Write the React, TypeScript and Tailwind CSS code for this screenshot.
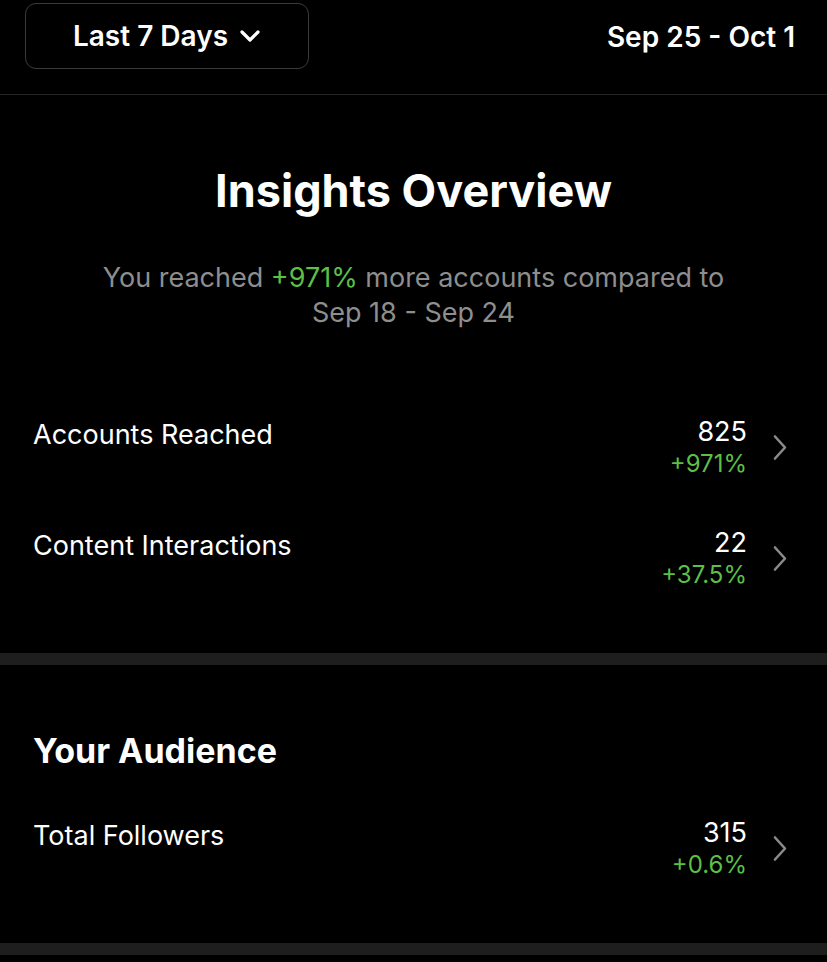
import React from "react";

const Chevron = () => (
  <svg width="18" height="28" viewBox="0 0 18 28" fill="none" className="shrink-0">
    <path d="M4 2.5 L14 13.5 L4 24.5" stroke="#8a8a8a" strokeWidth="2.6" strokeLinecap="round" strokeLinejoin="round" />
  </svg>
);

const Row = ({ label, value, change }: { label: string; value: string; change: string }) => (
  <div className="flex items-start justify-between pl-[33px] pr-[38px]">
    <div className="text-[27px] leading-[32px] text-white pt-[3px]">{label}</div>
    <div className="flex items-center gap-[24px]">
      <div className="flex flex-col items-end">
        <div className="text-[27px] leading-[32px] text-white">{value}</div>
        <div className="text-[24px] leading-[32px] text-[#5cbf46]">{change}</div>
      </div>
      <Chevron />
    </div>
  </div>
);

export default function App() {
  return (
    <div className="w-[827px] h-[962px] bg-black overflow-hidden" style={{ fontFamily: "Inter, 'Noto Sans', sans-serif" }}>
      <div className="flex items-start justify-between pt-[3px] h-[95px] border-b border-[#262626] pl-[25px] pr-[32px]">
        <button className="flex items-center justify-center gap-[11px] w-[284px] h-[66px] rounded-[11px] border border-[#3a3a3a] text-white text-[28px] font-semibold">
          <span>Last 7 Days</span>
          <svg width="22" height="14" viewBox="0 0 22 14" fill="none">
            <path d="M3 3 L11 11 L19 3" stroke="white" strokeWidth="3.2" strokeLinecap="round" strokeLinejoin="round" />
          </svg>
        </button>
        <div className="h-[68px] flex items-center text-white text-[28px] font-semibold">Sep 25 - Oct 1</div>
      </div>

      <div className="pt-[70px] text-center">
        <h1 className="text-[45px] leading-[52px] font-bold text-white">Insights Overview</h1>
        <p className="mt-[43px] text-[27px] leading-[35px] text-[#8e8e8e]">
          You reached <span className="text-[#5cbf46]">+971%</span> more accounts compared to
          <br />
          Sep 18 - Sep 24
        </p>
      </div>

      <div className="pt-[86px] flex flex-col gap-[47px]">
        <Row label="Accounts Reached" value="825" change="+971%" />
        <Row label="Content Interactions" value="22" change="+37.5%" />
      </div>

      <div className="mt-[62px] h-[12px] bg-[#1e1e1e]" />

      <div className="pt-[64px]">
        <h2 className="pl-[33px] text-[34px] leading-[44px] font-bold text-white">Your Audience</h2>
        <div className="mt-[44px]">
          <Row label="Total Followers" value="315" change="+0.6%" />
        </div>
      </div>

      <div className="mt-[62px] h-[12px] bg-[#1e1e1e]" />
    </div>
  );
}
